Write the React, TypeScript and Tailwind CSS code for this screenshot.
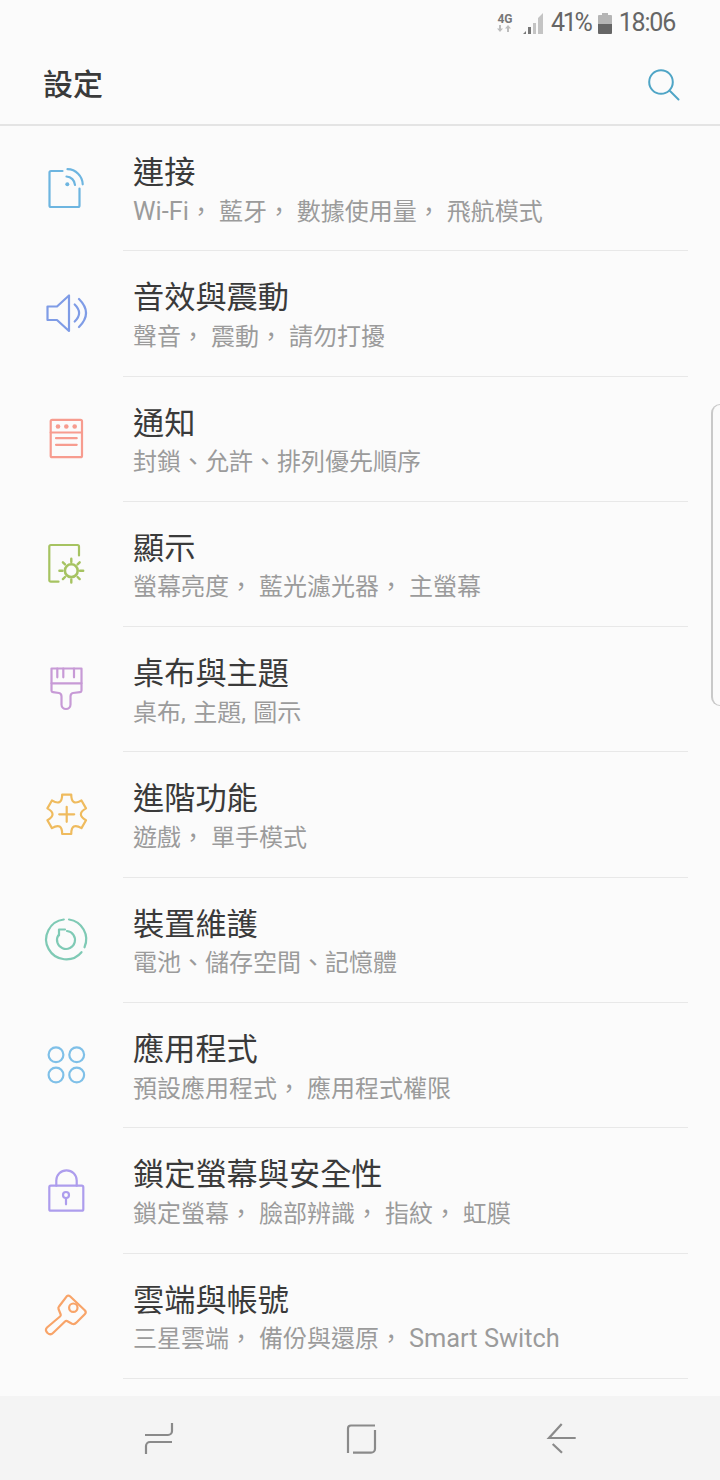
import React from "react";

const fontCls = "font-['Roboto','Noto_Sans_CJK_TC','Noto_Sans_CJK_JP',sans-serif]";

// gear outline with six rounded teeth
function gearPath(cx: number, cy: number) {
  const pt = (deg: number, r: number) => {
    const a = (deg * Math.PI) / 180;
    return `${(cx + r * Math.cos(a)).toFixed(2)} ${(cy + r * Math.sin(a)).toFixed(2)}`;
  };
  let d = "";
  for (let i = 0; i < 6; i++) {
    const t = -90 + i * 60;
    d += `${i === 0 ? "M" : "L"}${pt(t - 13, 20.2)} L${pt(t + 13, 20.2)} Q${pt(t + 30, 9)} ${pt(t + 47, 20.2)} `;
  }
  return d + "Z";
}

function Icon({ color, children }: { color: string; children: React.ReactNode }) {
  return (
    <svg
      width="48"
      height="48"
      viewBox="0 0 48 48"
      fill="none"
      stroke={color}
      strokeWidth="2.2"
      strokeLinecap="round"
      strokeLinejoin="round"
    >
      {children}
    </svg>
  );
}

const latinCls = "text-[25.4px] leading-[30px]";

const rows: { title: string; sub: React.ReactNode; icon: React.ReactNode }[] = [
  {
    title: "連接",
    sub: (
      <>
        <span className={latinCls}>Wi-Fi</span>， 藍牙， 數據使用量， 飛航模式
      </>
    ),
    icon: (
      <Icon color="#6db5e0">
        <path d="M20.5 6H9A1.5 1.5 0 0 0 7.5 7.5V40.5A1.5 1.5 0 0 0 9 42H36A1.5 1.5 0 0 0 37.5 40.5V23.5" />
        <circle cx="25.3" cy="19.3" r="2" fill="#6db5e0" stroke="none" />
        <path d="M24.5 11.5A9 9 0 0 1 33 20" />
        <path d="M25.5 4.2A15.5 15.5 0 0 1 40.7 19.3" />
      </Icon>
    ),
  },
  {
    title: "音效與震動",
    sub: "聲音， 震動， 請勿打擾",
    icon: (
      <Icon color="#7f9ce6">
        <path d="M5.5 16.5H15L27 5.5V41L15 30H5.5Z" />
        <path d="M32.7 14.5Q41.5 23 32.7 31.5" />
        <path d="M37 9Q51 23 37 37" />
      </Icon>
    ),
  },
  {
    title: "通知",
    sub: "封鎖、允許、排列優先順序",
    icon: (
      <Icon color="#f79c8f">
        <rect x="8.7" y="3.8" width="31.3" height="37.4" rx="1.5" />
        <path d="M8.7 16.5H40M14 22.2H34.7M14 28.8H34.7" />
        <circle cx="16" cy="10.5" r="2.3" fill="#f79c8f" stroke="none" />
        <circle cx="24.3" cy="10.5" r="2.3" fill="#f79c8f" stroke="none" />
        <circle cx="32.7" cy="10.5" r="2.3" fill="#f79c8f" stroke="none" />
      </Icon>
    ),
  },
  {
    title: "顯示",
    sub: "螢幕亮度， 藍光濾光器， 主螢幕",
    icon: (
      <Icon color="#a6c361">
        <path d="M37 14.5V5.5A1.5 1.5 0 0 0 35.5 4H8.8A1.5 1.5 0 0 0 7.3 5.5V39.2A1.5 1.5 0 0 0 8.8 40.7H16.5" />
        <circle cx="29.3" cy="29.7" r="6.4" strokeWidth="2.6" />
        <path
          strokeWidth="2.4"
          d="M29.3 17.8V21M29.3 38.5V41.6M17.4 29.7H20.5M38 29.7H41.2M20.9 21.3L23 23.4M35.6 36L37.7 38.1M37.7 21.3L35.6 23.4M23 36L20.9 38.1"
        />
      </Icon>
    ),
  },
  {
    title: "桌布與主題",
    sub: <span className="[word-spacing:1.5px]">桌布, 主題, 圖示</span>,
    icon: (
      <Icon color="#c79ad6">
        <path d="M9.5 2.5H39.5V24.5Q39.5 26 38 26.2L31 27Q28.5 27.5 28.5 30.5V38.5A4.5 4.5 0 0 1 19.5 38.5V30.5Q19.5 27.5 17 27L11 26.2Q9.5 26 9.5 24.5Z" />
        <path d="M9.5 17.3H39.5M15.3 2.5V11.3M21.3 2.5V11.3M32 2.5V11.3" />
      </Icon>
    ),
  },
  {
    title: "進階功能",
    sub: "遊戲， 單手模式",
    icon: (
      <Icon color="#efbb5e">
        <path d={gearPath(24.7, 22.3)} />
        <path d="M24.7 14.8V29.8M17.2 22.3H32.2" />
      </Icon>
    ),
  },
  {
    title: "裝置維護",
    sub: "電池、儲存空間、記憶體",
    icon: (
      <Icon color="#7fcab5">
        <path d="M27 2.5A20 20 0 0 1 42.5 30.3M39.5 35.2A20 20 0 1 1 21.8 2.5" />
        <path d="M25 14A9 9 0 1 1 16.3 18.3" />
        <path d="M23 12.5H17V18.5" />
      </Icon>
    ),
  },
  {
    title: "應用程式",
    sub: "預設應用程式， 應用程式權限",
    icon: (
      <Icon color="#7fc0e8">
        <circle cx="14" cy="12.7" r="7.4" />
        <circle cx="34.7" cy="12.7" r="7.4" />
        <circle cx="14" cy="33" r="7.4" />
        <circle cx="34.7" cy="33" r="7.4" />
      </Icon>
    ),
  },
  {
    title: "鎖定螢幕與安全性",
    sub: "鎖定螢幕， 臉部辨識， 指紋， 虹膜",
    icon: (
      <Icon color="#ad9ded">
        <rect x="7.3" y="17.7" width="34" height="25" rx="1.5" />
        <path d="M14.3 17.7V12.5A10.2 10.2 0 0 1 34.7 12.5V17.7" />
        <circle cx="24" cy="27" r="3" />
        <path d="M24 30V36.3" />
      </Icon>
    ),
  },
  {
    title: "雲端與帳號",
    sub: (
      <>
        三星雲端， 備份與還原， <span className={latinCls}>Smart Switch</span>
      </>
    ),
    icon: (
      <Icon color="#f8a469">
        <path d="M24.7 3.3Q26.3 1.8 28 3.3L43 17.5Q44.5 19.5 43 21L34.5 29.5Q32.5 31.7 30 30.7L25 28Q24 27.5 23 28.5L11 40Q8.5 42.5 5.5 40Q2.5 37 5 34.5L18 23.5Q19 22.5 18.7 21.5L16.5 16Q16 14.5 17 13.5Z" />
        <circle cx="31.3" cy="14.7" r="4.2" />
      </Icon>
    ),
  },
];

export default function App() {
  return (
    <div className={`relative flex h-[1480px] w-[720px] flex-col overflow-hidden bg-[#fbfbfb] ${fontCls}`}>
      {/* status bar */}
      <div className="flex h-[44px] items-center justify-end pr-[45px] pt-[2px] text-[25px] tracking-[-1.2px] text-[#666666]">
        <div className="mr-[7px] flex w-[20px] flex-col items-center">
          <span className="text-[12px] font-bold leading-[11px] tracking-normal text-[#777777]">4G</span>
          <svg width="16" height="7" viewBox="0 0 16 7" fill="#bdbdbd">
            <path d="M3 7L0 3.5H2V0H4V3.5H6ZM11 0L14 3.5H12V7H10V3.5H8Z" />
          </svg>
        </div>
        <svg width="22" height="22" viewBox="0 0 22 22" className="mr-[7px]">
          <path d="M1 22H4V19L1 22ZM6 22H9V15H6Z" fill="#777777" />
          <path d="M11 22H14V11H11ZM16 22H21V1L16 6Z" fill="#c4c4c4" />
        </svg>
        <span className="tracking-[-2.2px]">41%</span>
        <svg width="14" height="21" viewBox="0 0 14 21" className="mx-[7px]">
          <path d="M4 0H10V2H13A1 1 0 0 1 14 3V11H0V3A1 1 0 0 1 1 2H4Z" fill="#b5b5b5" />
          <path d="M0 11H14V20A1 1 0 0 1 13 21H1A1 1 0 0 1 0 20Z" fill="#666666" />
        </svg>
        <span>18:06</span>
      </div>

      {/* title bar */}
      <div className="flex h-[82px] shrink-0 items-center justify-between border-b-2 border-[#e4e4e4] pl-[43px] pr-[38px] pt-[1px]">
        <h1 className="text-[30px] font-medium leading-none text-[#3a3a3a]">設定</h1>
        <svg width="36" height="36" viewBox="0 0 36 36" fill="none" stroke="#4fa5c6" strokeWidth="2" strokeLinecap="round">
          <circle cx="15" cy="15" r="11.8" />
          <path d="M24 24L32.5 32.5" />
        </svg>
      </div>

      {/* settings list */}
      <div className="flex-1 overflow-hidden">
        {rows.map((row) => (
          <div key={row.title} className="flex h-[125.3px] pr-[32px]">
            <div className="flex w-[123px] shrink-0 items-center pl-[42px] pt-[1px]">{row.icon}</div>
            <div className="flex min-w-0 flex-1 flex-col border-b-[1.5px] border-[#e8e8e8] pl-[10px] pt-[27px]">
              <div className="text-[31.2px] leading-[40px] text-[#3a3a3a]">{row.title}</div>
              <div className="mt-[0.6px] text-[24px] leading-[36px] text-[#9b9b9b]">{row.sub}</div>
            </div>
          </div>
        ))}
      </div>

      {/* navigation bar */}
      <div className="flex h-[84px] shrink-0 items-center justify-between bg-[#f4f4f4] pl-[135px] pr-[134px]">
        <svg width="48" height="48" viewBox="0 0 48 48" fill="none" stroke="#8a8a8a" strokeWidth="2.2">
          <path d="M10 21H33A4 4 0 0 0 37 17V9" />
          <path d="M37 28H15A4 4 0 0 0 11 32V40" />
        </svg>
        <svg width="48" height="48" viewBox="0 0 48 48" fill="none" stroke="#8a8a8a" strokeWidth="2.2">
          <path d="M38 11.5H14A3 3 0 0 0 11 14.5V39" />
          <path d="M16 38.7H34A4 4 0 0 0 38 34.7V16" />
        </svg>
        <svg width="48" height="48" viewBox="0 0 48 48" fill="none" stroke="#8a8a8a" strokeWidth="2.2">
          <path d="M23.7 10L11 24H37.7" />
          <path d="M14.7 30L24 38.7" />
        </svg>
      </div>

      {/* edge panel handle */}
      <div className="absolute right-0 top-[404px] h-[302px] w-[9px] rounded-l-[10px] border-y border-l-2 border-[#c9c9c9]" />
    </div>
  );
}
